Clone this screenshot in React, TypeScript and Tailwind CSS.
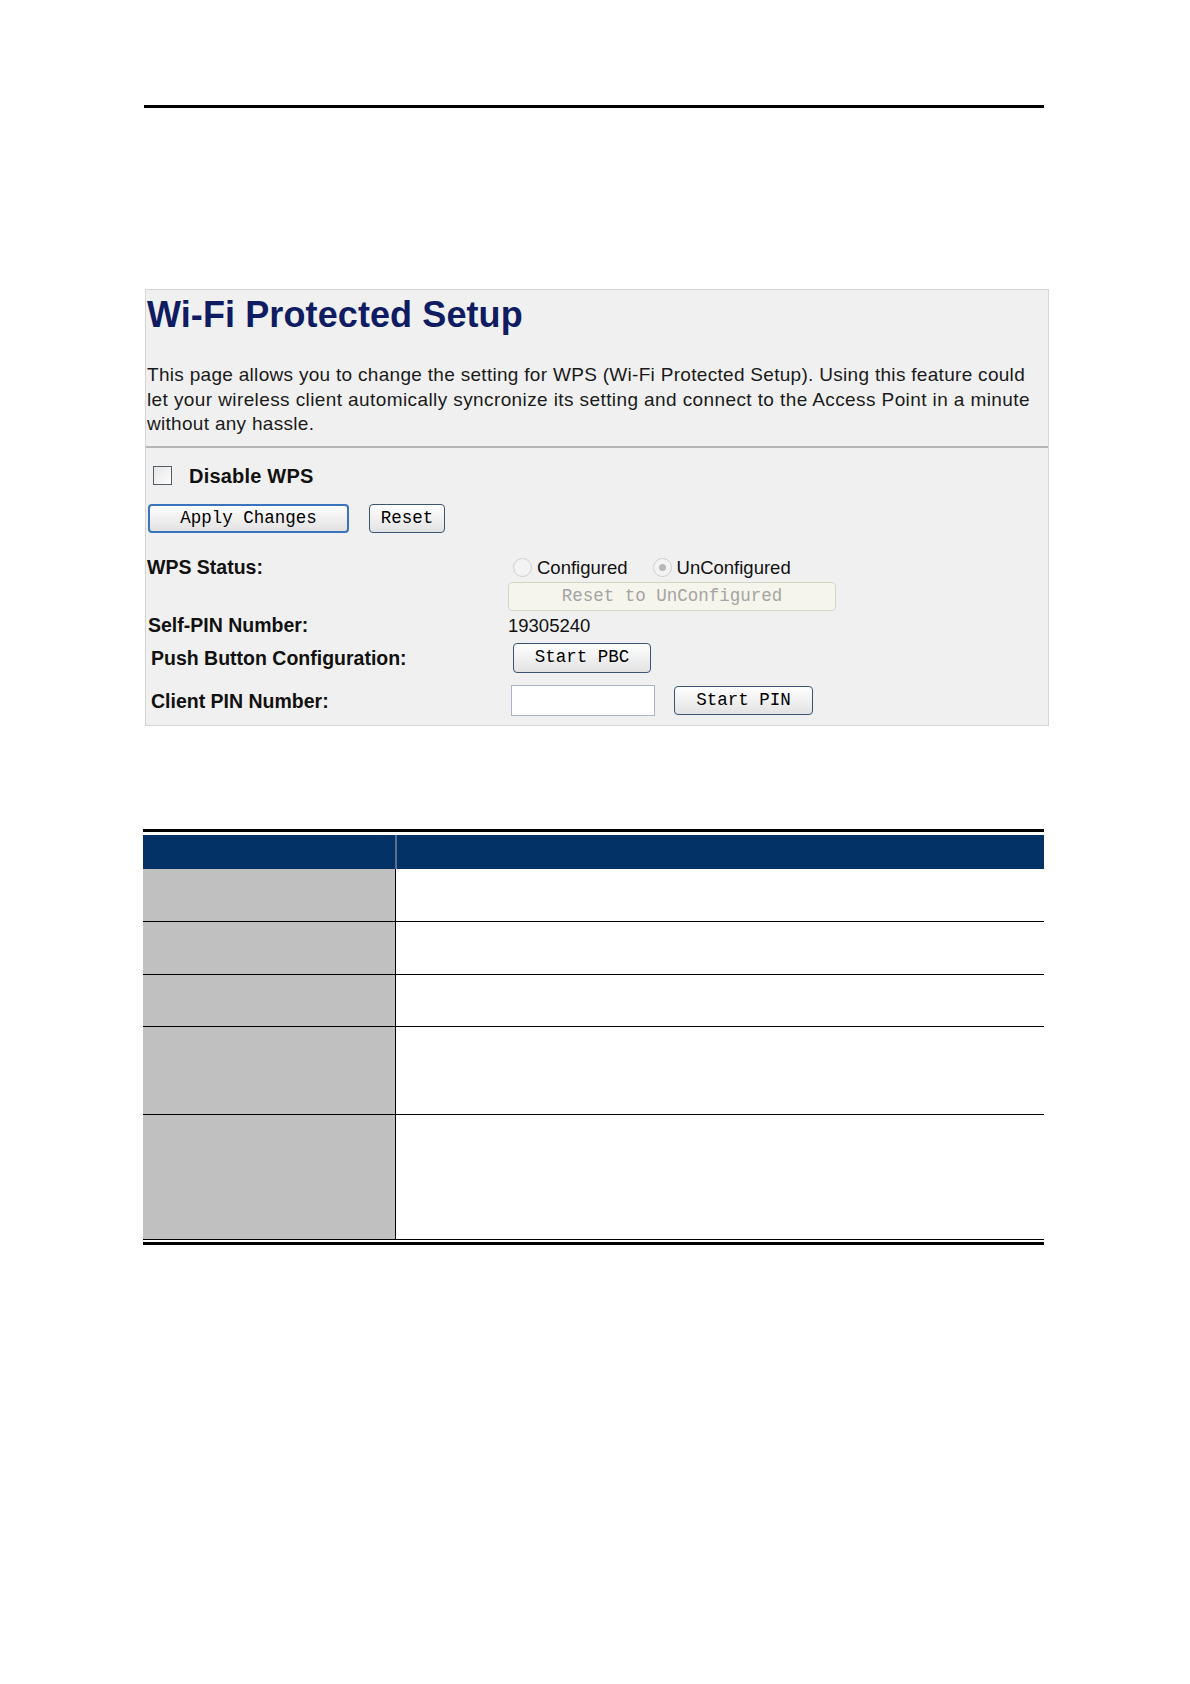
import React from 'react'

const sans = "font-['Liberation_Sans',Arial,sans-serif]"
const mono = "font-['Liberation_Mono','Courier_New',monospace]"

function Btn({ children, className = '', focus = false }: { children: React.ReactNode; className?: string; focus?: boolean }) {
  return (
    <div
      className={`${mono} flex items-center justify-center rounded-[4px] bg-gradient-to-b from-white to-[#e2e2e2] text-[17.5px] text-black ${
        focus ? 'border-2 border-[#3a74bd]' : 'border border-[#3b5573]'
      } ${className}`}
    >
      {children}
    </div>
  )
}

function Radio({ checked = false }: { checked?: boolean }) {
  return (
    <div className="w-[19px] h-[19px] rounded-full border border-[#cfcfcf] bg-[#f3f3f3] flex items-center justify-center">
      {checked && <div className="w-[7px] h-[7px] rounded-full bg-[#b8b8b8]" />}
    </div>
  )
}

// body row heights of the parameter table
const tableRows = [52, 53, 52, 88, 125]

export default function App() {
  return (
    <div className={`w-[1190px] h-[1684px] bg-white overflow-hidden ${sans}`}>
      <div className="pt-[105px]">
        <div className="ml-[144px] w-[900px] h-[3px] bg-black" />
      </div>

      {/* Screenshot of the router page */}
      <div className="mt-[181px] ml-[145px] w-[904px] h-[437px] border border-[#d6d6d6] bg-[#f0f0f0] text-[#111]">
        <h1 className="mt-[5px] pl-[1px] text-[36px] leading-[40px] font-bold text-[#0f1c62] tracking-[0.1px]">
          Wi-Fi Protected Setup
        </h1>
        <p className="mt-[28px] pl-[1px] text-[19px] leading-[24.5px] text-[#1a1a1a] whitespace-nowrap">
          <span className="tracking-[0.3px]">
            This page allows you to change the setting for WPS (Wi-Fi Protected Setup). Using this feature could
          </span>
          <br />
          <span className="tracking-[0.4px]">
            let your wireless client automically syncronize its setting and connect to the Access Point in a minute
          </span>
          <br />
          <span className="tracking-[0.3px]">without any hassle.</span>
        </p>
        <div className="mt-[9px] h-[2px] bg-[#b5b5b5]" />

        {/* Disable WPS */}
        <div className="mt-[10px] h-[36px] flex items-center">
          <div className="ml-[7px] w-[19px] h-[19px] border border-[#555d66] bg-gradient-to-br from-[#e4e4e4] to-white" />
          <span className="ml-[17px] text-[20px] font-bold tracking-[0.2px]">Disable WPS</span>
        </div>

        <div className="mt-[10px] flex items-center">
          <Btn focus className="ml-[2px] w-[201px] h-[29px]">Apply Changes</Btn>
          <Btn className="ml-[20px] w-[76px] h-[29px]">Reset</Btn>
        </div>

        {/* WPS Status */}
        <div className="mt-[23px] h-[24px] flex items-center">
          <div className="w-[362px] pl-[1px] text-[19.5px] font-bold">WPS Status:</div>
          <div className="ml-[5px] flex items-center text-[18.5px]">
            <Radio />
            <span className="ml-[5px]">Configured</span>
            <div className="ml-[25px]">
              <Radio checked />
            </div>
            <span className="ml-[5px]">UnConfigured</span>
          </div>
        </div>
        <div className="mt-[2px] flex">
          <div className="w-[362px]" />
          <div
            className={`${mono} w-[328px] h-[29px] rounded-[4px] border border-[#d3d3c6] bg-[#f5f5ec] text-[17.5px] text-[#a4a4a4] flex items-center justify-center`}
          >
            Reset to UnConfigured
          </div>
        </div>

        {/* Self-PIN */}
        <div className="mt-[4px] h-[22px] flex items-center">
          <div className="w-[362px] pl-[2px] text-[19.5px] font-bold">Self-PIN Number:</div>
          <div className="text-[18.5px]">19305240</div>
        </div>

        {/* Push button */}
        <div className="mt-[6px] h-[30px] flex items-center">
          <div className="w-[362px] pl-[5px] pt-[3px] text-[19.5px] font-bold">Push Button Configuration:</div>
          <Btn className="ml-[5px] w-[138px] h-[30px]">Start PBC</Btn>
        </div>

        {/* Client PIN */}
        <div className="mt-[12px] h-[31px] flex items-center">
          <div className="w-[362px] pl-[5px] pt-[3px] text-[19.5px] font-bold">Client PIN Number:</div>
          <div className="ml-[3px] w-[144px] h-[31px] bg-white border border-[#aab4c2]" />
          <Btn className="ml-[19px] w-[139px] h-[29px]">Start PIN</Btn>
        </div>
      </div>

      {/* Parameter table */}
      <div className="mt-[103px] ml-[143px] w-[901px]">
        <div className="h-[3px] bg-black" />
        <div className="mt-[3px] h-[34px] flex bg-[#033366]">
          <div className="w-[252px]" />
          <div className="w-[2px] bg-[#5a6f8c]" />
          <div className="flex-1" />
        </div>
        {tableRows.map((h, i) => (
          <div key={i} className={`flex ${i > 0 ? 'border-t border-black' : ''}`} style={{ height: h }}>
            <div className="w-[252px] bg-[#c0c0c0]" />
            <div className="w-[1px] bg-black" />
            <div className="flex-1 bg-white" />
          </div>
        ))}
        <div className="h-[1px] bg-black" />
        <div className="mt-[2px] h-[3px] bg-black" />
      </div>
    </div>
  )
}
